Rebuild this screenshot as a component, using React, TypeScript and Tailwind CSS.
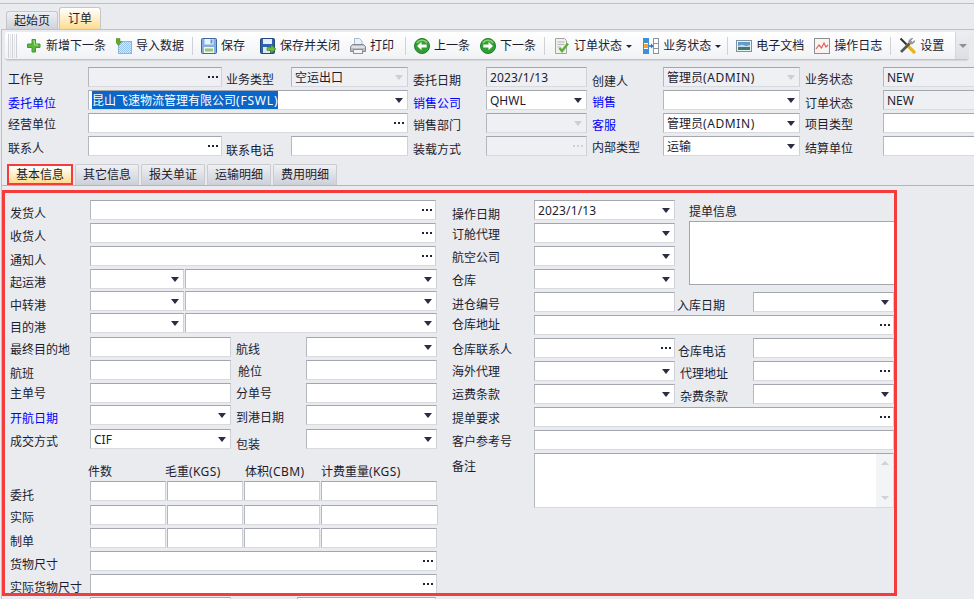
import type { ReactNode } from "react"
import clsx from "clsx"

function Dots({ off }: { off?: boolean }) {
  const c = off ? "bg-[#cfd1d6]" : "bg-[#22223a]"
  return (
    <div className="ml-auto mr-[3px] flex gap-[2px]">
      <div className={clsx("size-[2px]", c)} />
      <div className={clsx("size-[2px]", c)} />
      <div className={clsx("size-[2px]", c)} />
    </div>
  )
}

function Arrow({ off }: { off?: boolean }) {
  return (
    <div
      className={clsx(
        "ml-auto mr-[4px] h-0 w-0 border-x-[4px] border-t-[5px] border-x-transparent",
        off ? "border-t-[#cdcfd4]" : "border-t-[#2c2c44]"
      )}
    />
  )
}

function Field(props: { className?: string; kind?: "dots" | "arrow"; off?: boolean; darkDots?: boolean; children?: ReactNode }) {
  return (
    <div
      className={clsx(
        "flex h-5 shrink-0 items-center overflow-hidden whitespace-nowrap border border-t-[#a3a5af] border-l-[#b5b7be] border-r-[#cfd1d6] border-b-[#d8dade] pl-[3px] text-[#1c1c30]",
        props.off ? "bg-[#eff0f3]" : "bg-white",
        props.className
      )}
    >
      {props.children && <span className="pt-[1px]">{props.children}</span>}
      {props.kind === "dots" && <Dots off={props.off && !props.darkDots} />}
      {props.kind === "arrow" && <Arrow off={props.off} />}
    </div>
  )
}

function Label(props: { className?: string; blue?: boolean; children: ReactNode }) {
  return (
    <div
      className={clsx(
        "h-5 shrink-0 whitespace-nowrap leading-[22px]",
        props.blue ? "text-[#0000ff]" : "text-[#1c1c30]",
        props.className
      )}
    >
      {props.children}
    </div>
  )
}

function Row(props: { className?: string; children: ReactNode }) {
  return <div className={clsx("flex h-5 shrink-0", props.className)}>{props.children}</div>
}

// latin inside the form runs a little wider than Noto Sans
const Lat = ({ children }: { children: string }) => <span className="tracking-[0.6px]">{children}</span>

const Plus = () => (
  <svg width="16" height="16" viewBox="0 0 16 16">
    <path d="M6 1.500h3.500V6H14v3.500H9.500V14H6V9.500H1.500V6H6z" fill="#5cb83c" stroke="#3f9a33" strokeWidth="1" />
    <path d="M7 3h1.500v4H12" fill="none" stroke="#a5e08a" strokeWidth="1" />
  </svg>
)

const ImportIcon = () => (
  <svg width="16" height="16" viewBox="0 0 16 16">
    <defs>
      <pattern id="chk" width="2" height="2" patternUnits="userSpaceOnUse">
        <rect width="2" height="2" fill="#d8e9f8" />
        <rect width="1" height="1" fill="#96c3ec" />
        <rect x="1" y="1" width="1" height="1" fill="#96c3ec" />
      </pattern>
    </defs>
    <rect x="2.500" y="3.500" width="13" height="12" fill="url(#chk)" stroke="#8eb4d6" />
    <path d="M0 0.500h4v3h2l-3.500 4-3.500-4h1z" fill="#62a82e" stroke="#4b8a22" strokeWidth="0.5" />
  </svg>
)

const Floppy = () => (
  <svg width="16" height="16" viewBox="0 0 16 16">
    <rect x="0.500" y="0.500" width="15" height="15" rx="1" fill="#86aee0" stroke="#3a69ab" />
    <rect x="3.500" y="1" width="9" height="5.500" fill="#eef3fa" />
    <rect x="9.500" y="1.500" width="2" height="4" fill="#6d93c7" />
    <rect x="3" y="9" width="10" height="6" fill="#f2f5ea" />
    <rect x="4" y="10.500" width="8" height="3" fill="#92c47c" />
  </svg>
)

const FloppyClose = () => (
  <svg width="16" height="16" viewBox="0 0 16 16">
    <rect x="0.500" y="0.500" width="14" height="15" rx="1" fill="#2f62aa" stroke="#24477e" />
    <rect x="3" y="1" width="9" height="5" fill="#e8eef7" />
    <rect x="3" y="9" width="7" height="6" fill="#dfe7f2" />
    <path d="M7 9.500h4v-2.500l5 4-5 4v-2.500h-4z" fill="#6cbb2c" stroke="#3f8a1c" strokeWidth="0.6" />
  </svg>
)

const Printer = () => (
  <svg width="16" height="16" viewBox="0 0 16 16">
    <path d="M4.500 0.500h5l2.500 2.500v5h-7.500z" fill="#e9f1fb" stroke="#a4bbd6" />
    <path d="M2.500 6.500h11l2 2v5h-15v-5z" fill="#b9bcc2" stroke="#85888f" />
    <rect x="1.500" y="8" width="13" height="2" fill="#dfe1e5" />
    <rect x="3.500" y="11.500" width="9" height="4" fill="#f4f4f6" stroke="#8f9298" />
  </svg>
)

const Nav = ({ right }: { right?: boolean }) => (
  <svg width="16" height="16" viewBox="0 0 16 16">
    <circle cx="8" cy="8" r="7.500" fill="#2f9e33" stroke="#1f7d28" />
    <path d="M3 5a6 6 0 0 1 10 0" fill="none" stroke="#8ad36f" strokeWidth="1.5" />
    <g transform={right ? "rotate(180 8 8)" : undefined}>
      <path d="M3 8l4.500-4.200v2.600h5.200v3.200H7.500v2.600z" fill="#fff" />
    </g>
  </svg>
)

const OrderState = () => (
  <svg width="17" height="17" viewBox="0 0 17 17">
    <path d="M2.500 1.500h9l2 2v13h-11z" fill="#f0f0ee" stroke="#a4a4a2" />
    <path d="M4.500 5h7M4.500 7.500h7M4.500 10h3" stroke="#b4b4b2" />
    <path d="M6.500 11l2.500 3 6-7.500" fill="none" stroke="#5cae3a" strokeWidth="2.4" />
  </svg>
)

const BizState = () => (
  <svg width="16" height="16" viewBox="0 0 16 16">
    <rect x="0.500" y="0.500" width="5" height="15" fill="#fff" stroke="#3f8ed8" />
    <rect x="1" y="1" width="4" height="4" fill="#3f8ed8" />
    <rect x="1" y="6" width="4" height="4" fill="#f0a630" />
    <rect x="1" y="11" width="4" height="4" fill="#3f8ed8" />
    <rect x="10.500" y="0.500" width="5" height="15" fill="#fff" stroke="#8a93a0" />
    <path d="M11 5.500h4M11 10.500h4" stroke="#8a93a0" />
    <path d="M6 8h2.500" stroke="#2d6fb5" strokeWidth="1.5" />
    <path d="M8 5.500l2.500 2.500-2.500 2.500z" fill="#2d6fb5" />
  </svg>
)

const Picture = () => (
  <svg width="16" height="16" viewBox="0 0 16 16">
    <rect x="0.500" y="2.500" width="15" height="11" fill="#eef1f4" stroke="#7f8f9e" />
    <rect x="2" y="4" width="12" height="4" fill="#5d9bd0" />
    <rect x="2" y="8" width="12" height="4" fill="#3f7a6a" />
    <path d="M2 8l4-1.500 4 1.500 4-1v2H2z" fill="#c3dbe9" />
  </svg>
)

const LogIcon = () => (
  <svg width="16" height="16" viewBox="0 0 16 16">
    <rect x="0.500" y="0.500" width="15" height="15" fill="#f8f4f2" stroke="#8e8e90" />
    <path d="M2 11l3-4 2.500 3 2.500-5 2 4 2-2" fill="none" stroke="#e0605c" strokeWidth="1.2" />
  </svg>
)

const Tools = () => (
  <svg width="17" height="17" viewBox="0 0 17 17">
    <path d="M1.500 1.500l7 7" stroke="#2e2e34" strokeWidth="2" />
    <path d="M8.500 8.500l6.500 6.500" stroke="#e6b41e" strokeWidth="3.200" strokeLinecap="round" />
    <path d="M2 15l8.500-8.500" stroke="#55565c" strokeWidth="2.600" />
    <path d="M10 6.500c-1-2.500.8-5 3.800-5.200l-2 2.300 1.600 1.700 2.300-1.800c-.2 2.800-3 4.400-5.700 3z" fill="#9b9da3" stroke="#6c6e74" strokeWidth="0.5" />
  </svg>
)

function Tool(props: { icon: ReactNode; className?: string; caret?: boolean; children: string }) {
  return (
    <div className={clsx("flex shrink-0 items-center gap-[4px] px-[5px] text-[#1c1c30]", props.className)}>
      {props.icon}
      <span className="whitespace-nowrap">{props.children}</span>
      {props.caret && <div className="mt-[1px] h-0 w-0 border-x-[3px] border-t-[3px] border-x-transparent border-t-[#22223a]" />}
    </div>
  )
}

const Sep = ({ className }: { className: string }) => <div className={clsx("h-[18px] w-px shrink-0 bg-[#d0d2d8]", className)} />

function Toolbar() {
  return (
    <div className="ml-[3px] mt-[2px] flex h-[28px] w-[964px] items-center rounded-[3px] border-b border-b-[#bfc1c7] bg-gradient-to-b from-white to-[#f1f2f5] pl-[3px] shadow-[0_1px_1px_#d5d6da]">
      <div className="flex h-[24px] w-[13px] shrink-0 gap-[1px]">
        <div className="h-full w-px bg-[#cfd1d6]" />
        <div className="h-full w-px bg-[#e4e5e9]" />
        <div className="h-full w-px bg-[#cfd1d6]" />
        <div className="h-full w-px bg-[#e4e5e9]" />
        <div className="h-full w-px bg-[#cfd1d6]" />
      </div>
      <Tool icon={<Plus />}>新增下一条</Tool>
      <Tool icon={<ImportIcon />}>导入数据</Tool>
      <Sep className="mx-[3px]" />
      <Tool icon={<Floppy />}>保存</Tool>
      <Tool icon={<FloppyClose />} className="ml-[5px]">保存并关闭</Tool>
      <Tool icon={<Printer />}>打印</Tool>
      <Sep className="ml-[6px] mr-[3px]" />
      <Tool icon={<Nav />}>上一条</Tool>
      <Tool icon={<Nav right />}>下一条</Tool>
      <Sep className="mx-[3px]" />
      <Tool icon={<OrderState />} className="gap-[3px]" caret>订单状态</Tool>
      <Tool icon={<BizState />} className="ml-px" caret>业务状态</Tool>
      <Sep className="ml-[1px] mr-[3px]" />
      <Tool icon={<Picture />}>电子文档</Tool>
      <Tool icon={<LogIcon />}>操作日志</Tool>
      <Sep className="mx-[3px]" />
      <Tool icon={<Tools />}>设置</Tool>
      <div className="ml-auto flex h-full w-[14px] flex-col items-center justify-center rounded-r-[3px] border-l border-l-[#d4d6db] bg-gradient-to-b from-[#eceef1] to-[#dcdee3]">
        <div className="h-0 w-0 border-x-[4px] border-t-[4px] border-x-transparent border-t-[#8e9096]" />
      </div>
    </div>
  )
}

function HeaderForm() {
  return (
    <div className="ml-[6px] mt-[7px] grid w-[975px] grid-cols-[80px_134px_69px_117px_78px_101px_76px_137px_83px_100px] gap-y-[3px]">
      <Label className="pt-[2px]">工作号</Label>
      <Field kind="dots" off darkDots />
      <Label className="pl-[4px] pt-[2px]">业务类型</Label>
      <Field kind="arrow" off>空运出口</Field>
      <Label className="pl-[5px] pt-[3px]">委托日期</Label>
      <Field off><span className="tracking-[0.15px]">2023/1/13</span></Field>
      <Label className="pl-[5px] pt-[4px]">创建人</Label>
      <Field kind="arrow" off>管理员<Lat>(ADMIN)</Lat></Field>
      <Label className="pl-[5px] pt-[2px]">业务状态</Label>
      <Field off>NEW</Field>

      <Label blue className="pt-[3px]">委托单位</Label>
      <Field kind="arrow" className="col-span-3">
        <span className="bg-[#0a66c8] py-[1px] text-white">昆山飞速物流管理有限公司<span className="tracking-[0.8px]">(FSWL)</span></span>
      </Field>
      <Label blue className="pl-[5px] pt-[3px]">销售公司</Label>
      <Field kind="arrow">QHWL</Field>
      <Label blue className="pl-[5px] pt-[2px]">销售</Label>
      <Field kind="arrow" />
      <Label className="pl-[5px] pt-[3px]">订单状态</Label>
      <Field off>NEW</Field>

      <Label className="pt-[1px]">经营单位</Label>
      <Field kind="dots" className="col-span-3" />
      <Label className="pl-[5px] pt-[2px]">销售部门</Label>
      <Field kind="arrow" off />
      <Label blue className="pl-[5px] pt-[2px]">客服</Label>
      <Field kind="arrow">管理员<Lat>(ADMIN)</Lat></Field>
      <Label className="pl-[5px] pt-[1px]">项目类型</Label>
      <Field />

      <Label className="pt-[2px]">联系人</Label>
      <Field kind="dots" />
      <Label className="pl-[4px] pt-[4px]">联系电话</Label>
      <Field />
      <Label className="pl-[5px] pt-[3px]">装载方式</Label>
      <Field kind="dots" off />
      <Label className="pl-[5px] pt-[1px]">内部类型</Label>
      <Field kind="arrow">运输</Field>
      <Label className="pl-[5px] pt-[2px]">结算单位</Label>
      <Field />
    </div>
  )
}

function SubTabs() {
  const rest = ["其它信息", "报关单证", "运输明细", "费用明细"]
  return (
    <div className="mt-[8px] flex h-[22px] gap-[2px] border-b border-b-[#b4b5b9] pl-[5px]">
      <div className="flex h-[21px] w-[66px] items-center justify-center border-2 border-[#f53b3b] bg-gradient-to-b from-white to-[#fddc8e] text-[#1c1c30]">基本信息</div>
      {rest.map((t) => (
        <div key={t} className="flex h-[21px] w-[64px] items-center justify-center rounded-t-[2px] border-x border-t border-[#c9cbd1] bg-gradient-to-b from-[#eef0f3] to-[#cdd0d8] text-[#1c1c30]">
          {t}
        </div>
      ))}
    </div>
  )
}

function LeftForm() {
  return (
    <div className="flex w-[442px] shrink-0 flex-col pl-[5px] pt-[7px]">
      <Row><Label className="w-[80px] pt-[3px]">发货人</Label><Field kind="dots" className="w-[346px]" /></Row>
      <Row className="mt-[3px]"><Label className="w-[80px] pt-[3px]">收货人</Label><Field kind="dots" className="w-[346px]" /></Row>
      <Row className="mt-[3px]"><Label className="w-[80px] pt-[4px]">通知人</Label><Field kind="dots" className="w-[346px]" /></Row>
      <Row className="mt-[3px]">
        <Label className="w-[80px] pt-[3px]">起运港</Label>
        <Field kind="arrow" className="w-[94px]" />
        <Field kind="arrow" className="ml-[1px] w-[252px]" />
      </Row>
      <Row className="mt-[2px]">
        <Label className="w-[80px] pt-[4px]">中转港</Label>
        <Field kind="arrow" className="w-[94px]" />
        <Field kind="arrow" className="ml-[1px] w-[252px]" />
      </Row>
      <Row className="mt-[2px]">
        <Label className="w-[80px] pt-[4px]">目的港</Label>
        <Field kind="arrow" className="w-[94px]" />
        <Field kind="arrow" className="ml-[1px] w-[252px]" />
      </Row>
      <Row className="mt-[4px]">
        <Label className="w-[80px] pt-[2px]">最终目的地</Label>
        <Field className="w-[141px]" />
        <Label className="w-[75px] pl-[5px] pt-[2px]">航线</Label>
        <Field kind="arrow" className="w-[131px]" />
      </Row>
      <Row className="mt-[3px]">
        <Label className="w-[80px] pt-[3px]">航班</Label>
        <Field className="w-[141px]" />
        <Label className="w-[75px] pl-[7px] pt-px">舱位</Label>
        <Field className="w-[131px]" />
      </Row>
      <Row className="mt-[3px]">
        <Label className="w-[80px]">主单号</Label>
        <Field className="w-[141px]" />
        <Label className="w-[75px] pl-[5px]">分单号</Label>
        <Field className="w-[131px]" />
      </Row>
      <Row className="mt-[2px]">
        <Label blue className="w-[80px] pt-[3px]">开航日期</Label>
        <Field kind="arrow" className="w-[141px]" />
        <Label className="w-[75px] pl-[5px] pt-[2px]">到港日期</Label>
        <Field kind="arrow" className="w-[131px]" />
      </Row>
      <Row className="mt-[4px]">
        <Label className="w-[80px] pt-[2px]">成交方式</Label>
        <Field kind="arrow" className="w-[141px]">CIF</Field>
        <Label className="w-[75px] pl-[5px] pt-[5px]">包装</Label>
        <Field kind="arrow" className="w-[131px]" />
      </Row>
      <Row className="mt-[12px]">
        <Label className="w-[78px]">{""}</Label>
        <Label className="w-[77px]">件数</Label>
        <Label className="w-[80px]">毛重<span className="tracking-[0.4px]">(KGS)</span></Label>
        <Label className="w-[76px]">体积<span className="tracking-[0.4px]">(CBM)</span></Label>
        <Label>计费重量<span className="tracking-[0.4px]">(KGS)</span></Label>
      </Row>
      <Row>
        <Label className="w-[80px] pt-[4px]">委托</Label>
        <Field className="w-[76px]" />
        <Field className="ml-px w-[76px]" />
        <Field className="ml-px w-[76px]" />
        <Field className="ml-px w-[116px]" />
      </Row>
      <Row className="mt-[4px]">
        <Label className="w-[80px] pt-[2px]">实际</Label>
        <Field className="w-[76px]" />
        <Field className="ml-px w-[76px]" />
        <Field className="ml-px w-[76px]" />
        <Field className="ml-px w-[117px]" />
      </Row>
      <Row className="mt-[3px]">
        <Label className="w-[80px] pt-[3px]">制单</Label>
        <Field className="w-[76px]" />
        <Field className="ml-px w-[76px]" />
        <Field className="ml-px w-[76px]" />
        <Field className="ml-px w-[116px]" />
      </Row>
      <Row className="mt-[3px]"><Label className="w-[80px] pt-[3px]">货物尺寸</Label><Field kind="dots" className="w-[347px]" /></Row>
      <Row className="mt-[3px]"><Label className="w-[80px] pt-[3px]">实际货物尺寸</Label><Field kind="dots" className="w-[347px]" /></Row>
    </div>
  )
}

function RightForm() {
  return (
    <div className="flex flex-col pl-[5px] pt-[7px]">
      <div className="flex">
        <div className="flex w-[237px] shrink-0 flex-col">
          <Row><Label className="w-[82px] pt-[4px]">操作日期</Label><Field kind="arrow" className="w-[141px]"><span className="tracking-[0.15px]">2023/1/13</span></Field></Row>
          <Row className="mt-[3px]"><Label className="w-[82px] pt-[1px]">订舱代理</Label><Field kind="arrow" className="w-[141px]" /></Row>
          <Row className="mt-[3px]"><Label className="w-[82px] pt-[1px]">航空公司</Label><Field kind="arrow" className="w-[141px]" /></Row>
          <Row className="mt-[3px]"><Label className="w-[82px] pt-[1px]">仓库</Label><Field kind="arrow" className="w-[141px]" /></Row>
        </div>
        <div className="flex flex-col">
          <Label className="h-[21px] pt-px">提单信息</Label>
          <div className="h-[64px] w-[205px] border-y border-l border-[#a3a5af] bg-white" />
        </div>
      </div>
      <Row className="mt-[3px]">
        <Label className="w-[82px] pt-[2px]">进仓编号</Label>
        <Field className="w-[141px]" />
        <Label className="w-[78px] pl-[2px] pt-[3px]">入库日期</Label>
        <Field kind="arrow" className="w-[141px]" />
      </Row>
      <Row className="mt-[3px]"><Label className="w-[82px] -mt-px">仓库地址</Label><Field kind="dots" className="w-[360px]" /></Row>
      <Row className="mt-[3px]">
        <Label className="w-[82px] pt-[1px]">仓库联系人</Label>
        <Field kind="dots" className="w-[141px]" />
        <Label className="w-[78px] pl-[3px] pt-[3px]">仓库电话</Label>
        <Field className="w-[141px]" />
      </Row>
      <Row className="mt-[3px]">
        <Label className="w-[82px]">海外代理</Label>
        <Field kind="arrow" className="w-[141px]" />
        <Label className="w-[78px] pl-[5px] pt-[2px]">代理地址</Label>
        <Field kind="dots" className="w-[141px]" />
      </Row>
      <Row className="mt-[3px]">
        <Label className="w-[82px]">运费条款</Label>
        <Field kind="arrow" className="w-[141px]" />
        <Label className="w-[78px] pl-[5px] pt-[2px]">杂费条款</Label>
        <Field kind="arrow" className="w-[141px]" />
      </Row>
      <Row className="mt-[3px]"><Label className="w-[82px] pt-px">提单要求</Label><Field kind="dots" className="w-[360px]" /></Row>
      <Row className="mt-[3px]"><Label className="w-[82px] pt-px">客户参考号</Label><Field className="w-[360px]" /></Row>
      <div className="mt-[3px] flex">
        <Label className="w-[82px] pt-[3px]">备注</Label>
        <div className="flex h-[55px] w-[360px] justify-end border border-t-[#a3a5af] border-l-[#b5b7be] border-r-[#d8dade] border-b-[#d8dade] bg-white">
          <div className="flex w-[17px] flex-col items-center justify-between bg-[#f3f4f6] py-[7px]">
            <div className="h-0 w-0 border-x-[4px] border-b-[4px] border-x-transparent border-b-[#d0d2d7]" />
            <div className="h-0 w-0 border-x-[4px] border-t-[4px] border-x-transparent border-t-[#d0d2d7]" />
          </div>
        </div>
      </div>
    </div>
  )
}

export default function App() {
  return (
    <div className="h-[599px] w-[974px] overflow-hidden bg-[#e9ebef] font-['Noto_Sans','Noto_Sans_CJK_SC',sans-serif] text-[12px]">
      <div className="h-[4px] border-b border-b-[#bfc0c4]" />
      <div className="flex h-[25px] items-end gap-px pl-[6px]">
        <div className="flex h-[18px] w-[52px] items-center justify-center rounded-t-[3px] border-x border-t border-[#c4c6cc] bg-gradient-to-b from-[#eef0f3] to-[#cfd2da] text-[#1c1c30]">起始页</div>
        <div className="flex h-[22px] w-[42px] items-center justify-center rounded-t-[3px] border-x border-t border-[#c4c6cc] bg-gradient-to-b from-white to-[#fddc8e] text-[#1c1c30]">订单</div>
      </div>
      <div className="ml-px h-[570px] border-l border-t border-[#bfc0c4]">
        <Toolbar />
        <HeaderForm />
        <SubTabs />
        <div className="mt-[4px] flex h-[406px] w-[895px] overflow-hidden border-[3px] border-[#f53b3b]">
          <LeftForm />
          <RightForm />
        </div>
        <Row className="mt-px pl-[88px]">
          <Field className="w-[141px]" />
          <Field className="ml-[66px] w-[139px]" />
        </Row>
      </div>
    </div>
  )
}
